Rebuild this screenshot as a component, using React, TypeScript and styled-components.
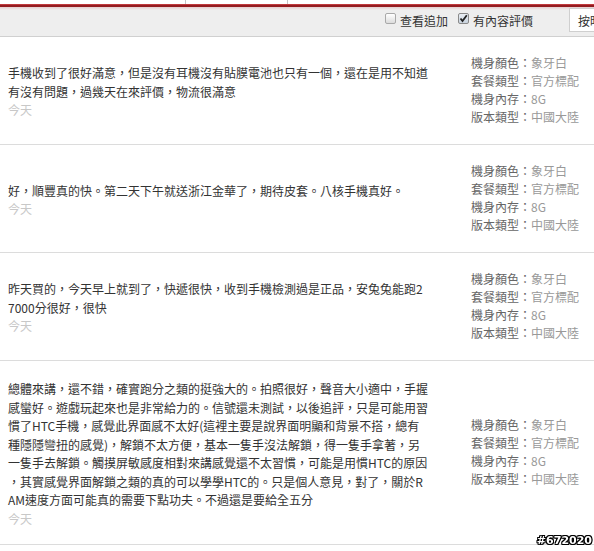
import React from 'react'
import styled, { createGlobalStyle } from 'styled-components'

const GlobalStyle = createGlobalStyle`
  html, body {
    margin: 0;
    padding: 0;
    background: #fff;
    overflow: hidden;
  }
  body {
    font-family: "Noto Sans CJK TC", "Noto Sans CJK SC", sans-serif;
    font-size: 12px;
    color: #333;
  }
`

interface Review {
  lines: string[]
  date: string
}

const reviews: Review[] = [
  {
    lines: [
      '手機收到了很好滿意，但是沒有耳機沒有貼膜電池也只有一個，還在是用不知道',
      '有沒有問題，過幾天在來評價，物流很滿意',
    ],
    date: '今天',
  },
  {
    lines: ['好，順豐真的快。第二天下午就送浙江金華了，期待皮套。八核手機真好。'],
    date: '今天',
  },
  {
    lines: [
      '昨天買的，今天早上就到了，快遞很快，收到手機檢測過是正品，安兔兔能跑2',
      '7000分很好，很快',
    ],
    date: '今天',
  },
  {
    lines: [
      '總體來講，還不錯，確實跑分之類的挺強大的。拍照很好，聲音大小適中，手握',
      '感蠻好。遊戲玩起來也是非常給力的。信號還未測試，以後追評，只是可能用習',
      '慣了HTC手機，感覺此界面感不太好(這裡主要是說界面明顯和背景不搭，總有',
      '種隱隱彎扭的感覺)，解鎖不太方便，基本一隻手沒法解鎖，得一隻手拿著，另',
      '一隻手去解鎖。觸摸屏敏感度相對來講感覺還不太習慣，可能是用慣HTC的原因',
      '，其實感覺界面解鎖之類的真的可以學學HTC的。只是個人意見，對了，關於R',
      'AM速度方面可能真的需要下點功夫。不過還是要給全五分',
    ],
    date: '今天',
  },
]

const specs = [
  { label: '機身顏色：', value: '象牙白' },
  { label: '套餐類型：', value: '官方標配' },
  { label: '機身內存：', value: '8G' },
  { label: '版本類型：', value: '中國大陸' },
]

const Page = styled.div`
  width: 660px;
`

const TabStrip = styled.div`
  display: flex;
  height: 4px;
  background: #fff;
`

const Tab = styled.div<{ $w: number }>`
  box-sizing: border-box;
  flex-shrink: 0;
  width: ${p => p.$w}px;
  height: 100%;
  border-right: 1px solid #c4c4c4;
`

const RedBar = styled.div`
  height: 3px;
  background: linear-gradient(#c03a3d 0, #c03a3d 1px, #941b1f 1px);
`

const Toolbar = styled.div`
  box-sizing: border-box;
  display: flex;
  justify-content: flex-end;
  align-items: flex-start;
  height: 30px;
  padding: 1px 10px 0 0;
  background: linear-gradient(#e5cccc 0, #eeeeee 3px, #eeeeee 100%);
  border-bottom: 1px solid #d0d0d0;
`

const CheckLabel = styled.label<{ $gapAfter: number }>`
  display: flex;
  align-items: center;
  gap: 4px;
  height: 24px;
  margin-right: ${p => p.$gapAfter}px;
  font-size: 12px;
  color: #333;
  white-space: nowrap;
`

const CheckBox = styled.span<{ $checked?: boolean }>`
  box-sizing: border-box;
  display: inline-flex;
  align-items: center;
  justify-content: center;
  width: 11px;
  height: 11px;
  margin-top: -3px;
  border: 1px solid ${p => (p.$checked ? '#8a8a8a' : '#a9a9a9')};
  border-radius: 2px;
  background: ${p =>
    p.$checked ? 'linear-gradient(#e9eef4, #c9d3de)' : 'linear-gradient(#ffffff, #dcdcdc)'};
`

const SortSelect = styled.div`
  box-sizing: border-box;
  flex-shrink: 0;
  width: 81px;
  height: 24px;
  padding: 0 8px;
  display: flex;
  align-items: center;
  background: #fff;
  border: 1px solid #cfcfcf;
  font-size: 12px;
  color: #333;
  white-space: nowrap;
`

const ReviewRow = styled.div`
  box-sizing: border-box;
  display: grid;
  grid-template-columns: 420px 1fr;
  column-gap: 43px;
  align-items: center;
  min-height: 108px;
  padding: 15px 0 16px 8px;
  border-bottom: 1px solid #dcdcdc;
  background: #fff;
`

const ReviewText = styled.div`
  padding-top: 4px;
  line-height: 18.5px;
  white-space: nowrap;
`

const TextLine = styled.div`
  color: #333;
`

const DateLine = styled.div`
  color: #c8c8c8;
`

const SpecList = styled.div`
  line-height: 18px;
  white-space: nowrap;
`

const SpecLabel = styled.span`
  color: #666;
`

const SpecValue = styled.span`
  color: #999;
`

const Watermark = styled.div`
  position: fixed;
  right: 2px;
  bottom: 5px;
  font-family: "DejaVu Sans", sans-serif;
  font-weight: bold;
  font-size: 11px;
  line-height: 11px;
  color: #fff;
  text-shadow: 1px 0 0 #000, -1px 0 0 #000, 0 1px 0 #000, 0 -1px 0 #000,
    1px 1px 0 #000, -1px -1px 0 #000, 1px -1px 0 #000, -1px 1px 0 #000;
`

const CheckMark: React.FC = () => (
  <svg width="9" height="9" viewBox="0 0 9 9">
    <path d="M1.5 4.5 L3.5 7 L7.8 1.2" fill="none" stroke="#222" strokeWidth="1.8" />
  </svg>
)

const App: React.FC = () => {
  return (
    <Page>
      <GlobalStyle />
      <TabStrip>
        <Tab $w={186} />
        <Tab $w={102} />
      </TabStrip>
      <RedBar />
      <Toolbar>
        <CheckLabel $gapAfter={10}>
          <CheckBox />
          <span>查看追加</span>
        </CheckLabel>
        <CheckLabel $gapAfter={36}>
          <CheckBox $checked>
            <CheckMark />
          </CheckBox>
          <span>有內容評價</span>
        </CheckLabel>
        <SortSelect>按時間排序</SortSelect>
      </Toolbar>

      {reviews.map((r, i) => (
        <ReviewRow key={i}>
          <ReviewText>
            {r.lines.map((line, j) => (
              <TextLine key={j}>{line}</TextLine>
            ))}
            <DateLine>{r.date}</DateLine>
          </ReviewText>
          <SpecList>
            {specs.map(s => (
              <div key={s.label}>
                <SpecLabel>{s.label}</SpecLabel>
                <SpecValue>{s.value}</SpecValue>
              </div>
            ))}
          </SpecList>
        </ReviewRow>
      ))}

      <Watermark>#672020</Watermark>
    </Page>
  )
}

export default App
